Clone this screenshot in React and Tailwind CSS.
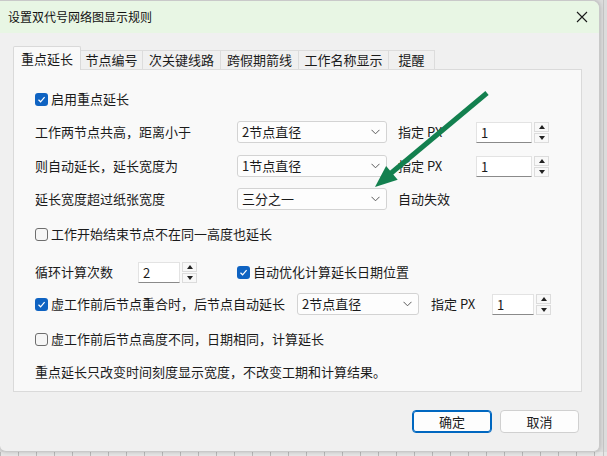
import React from 'react';

const font = { fontFamily: '"Noto Sans CJK SC", "Noto Sans", sans-serif' };

const tabs = [
  { label: '重点延长', w: 'w-[68px]' },
  { label: '节点编号', w: 'w-[62px]' },
  { label: '次关键线路', w: 'w-[78px]' },
  { label: '跨假期箭线', w: 'w-[78px]' },
  { label: '工作名称显示', w: 'w-[90px]' },
  { label: '提醒', w: 'w-[46px]' },
];

const CheckBox = ({ checked, label }) => (
  <div className="flex items-center h-[22px]">
    {checked ? (
      <span className="w-[13px] h-[13px] rounded-[3px] bg-[#0f63c2] flex items-center justify-center">
        <svg width="9" height="9" viewBox="0 0 9 9">
          <path d="M1.5 4.8 L3.6 6.8 L7.6 2.2" fill="none" stroke="#fff" strokeWidth="1.2" />
        </svg>
      </span>
    ) : (
      <span className="w-[13px] h-[13px] rounded-[3px] border border-[#6e6e6e] bg-[#f6f6f6]" />
    )}
    <span className="ml-[3px] leading-[22px]">{label}</span>
  </div>
);

const Select = ({ value, w }) => (
  <div className={`${w} shrink-0 h-[22px] flex items-center justify-between bg-[#fdfdfd] border border-[#d3d3d3] rounded-[3px] pl-[4px] pr-[6px]`}>
    <span className="leading-[20px]">{value}</span>
    <svg width="9" height="6" viewBox="0 0 9 6">
      <path d="M0.5 0.8 L4.5 4.8 L8.5 0.8" fill="none" stroke="#5a5a5a" strokeWidth="1" />
    </svg>
  </div>
);

const Spinner = () => (
  <div className="flex flex-col gap-[1px] ml-[2px] h-[21px]">
    <div className="w-[15px] h-[10px] bg-[#f8f8f8] border border-[#dcdcdc] flex items-center justify-center">
      <svg width="6" height="4" viewBox="0 0 6 4"><path d="M0 4 L3 0 L6 4 Z" fill="#222" /></svg>
    </div>
    <div className="w-[15px] h-[10px] bg-[#f8f8f8] border border-[#dcdcdc] flex items-center justify-center">
      <svg width="6" height="4" viewBox="0 0 6 4"><path d="M0 0 L6 0 L3 4 Z" fill="#222" /></svg>
    </div>
  </div>
);

const NumInput = ({ value, w }) => (
  <div className="flex items-center shrink-0">
    <div className={`${w} h-[21px] bg-white border border-[#e3e3e3] border-b-[#8a8a8a] pl-[4px] leading-[19px]`}>
      {value}
    </div>
    <Spinner />
  </div>
);

export default function App() {
  return (
    <div
      className="relative w-[607px] h-[456px] overflow-hidden bg-[#dcdcdc] text-[13px] text-[#1b1b1b]"
      style={font}
    >
      <div className="absolute left-0 right-0 top-[452px] h-[4px] bg-[repeating-linear-gradient(90deg,#b9b9b9_0px,#b9b9b9_1px,#e6e6e6_1px,#e6e6e6_18px)]" />
      <div className="absolute top-0 bottom-0 left-[603px] w-[1px] bg-[#c4c4c4]" />

      <div className="relative w-[600px] h-[452px] bg-[#f0f0f0] rounded-tr-[8px] rounded-b-[6px] border border-l-0 border-[#c9c9c9] shadow-[0_0_4px_rgba(0,0,0,0.2)] overflow-hidden flex flex-col">
        {/* title bar */}
        <div className="h-[32px] bg-[#e8f6e4] flex items-center justify-between pl-[8px] pr-[10px] shrink-0">
          <span className="text-[12px] leading-[16px] text-[#111]">设置双代号网络图显示规则</span>
          <svg width="12" height="12" viewBox="0 0 12 12" className="mr-[1px]">
            <path d="M1 1 L11 11 M11 1 L1 11" stroke="#1a1a1a" strokeWidth="1.1" />
          </svg>
        </div>

        <div className="pt-[14px] pl-[13px]">
          {/* tabs */}
          <div className="flex items-end h-[23px]">
            {tabs.map((t, i) =>
              i === 0 ? (
                <div
                  key={t.label}
                  className={`${t.w} h-[24px] relative z-10 bg-[#f9f9f9] border border-b-0 border-[#d9d9d9] rounded-t-[2px] flex items-center justify-center leading-[22px]`}
                >
                  {t.label}
                </div>
              ) : (
                <div
                  key={t.label}
                  className={`${t.w} h-[20px] bg-[#f0f0f0] border border-l-0 border-[#dcdcdc] flex items-center justify-center leading-[18px]`}
                >
                  {t.label}
                </div>
              )
            )}
          </div>

          {/* panel */}
          <div className="w-[569px] h-[323px] -mt-px bg-[#f9f9f9] border border-[#dadada] pl-[21px] pt-[18px]">
            <CheckBox checked label="启用重点延长" />

            <div className="flex items-center h-[22px] mt-[11px]">
              <span className="w-[202px] shrink-0">工作两节点共高，距离小于</span>
              <Select value="2节点直径" w="w-[150px]" />
              <span className="w-[89px] shrink-0 pl-[11px]">指定 PX</span>
              <NumInput value="1" w="w-[56px]" />
            </div>

            <div className="flex items-center h-[22px] mt-[12px]">
              <span className="w-[202px] shrink-0">则自动延长，延长宽度为</span>
              <Select value="1节点直径" w="w-[150px]" />
              <span className="w-[89px] shrink-0 pl-[11px]">指定 PX</span>
              <NumInput value="1" w="w-[56px]" />
            </div>

            <div className="flex items-center h-[22px] mt-[11px]">
              <span className="w-[202px] shrink-0">延长宽度超过纸张宽度</span>
              <Select value="三分之一" w="w-[150px]" />
              <span className="pl-[11px]">自动失效</span>
            </div>

            <div className="mt-[13px]">
              <CheckBox label="工作开始结束节点不在同一高度也延长" />
            </div>

            <div className="flex items-center h-[22px] mt-[16px]">
              <div className="w-[202px] shrink-0 flex items-center">
                <span className="w-[103px] shrink-0">循环计算次数</span>
                <NumInput value="2" w="w-[42px]" />
              </div>
              <CheckBox checked label="自动优化计算延长日期位置" />
            </div>

            <div className="flex items-center h-[22px] mt-[10px]">
              <div className="w-[262px] shrink-0">
                <CheckBox checked label="虚工作前后节点重合时，后节点自动延长" />
              </div>
              <Select value="2节点直径" w="w-[122px]" />
              <span className="w-[73px] shrink-0 pl-[12px]">指定 PX</span>
              <NumInput value="1" w="w-[42px]" />
            </div>

            <div className="mt-[13px]">
              <CheckBox label="虚工作前后节点高度不同，日期相同，计算延长" />
            </div>

            <div className="h-[22px] mt-[11px] leading-[22px]">
              重点延长只改变时间刻度显示宽度，不改变工期和计算结果。
            </div>
          </div>
        </div>

        {/* buttons */}
        <div className="flex justify-end gap-[8px] pr-[20px] mt-[18px]">
          <button className="w-[80px] h-[23px] rounded-[4px] bg-[#fdfdfd] border border-[#0067c0] shadow-[inset_0_0_0_1px_#0067c0] leading-[21px] text-[13px]">
            确定
          </button>
          <button className="w-[79px] h-[23px] rounded-[4px] bg-[#fdfdfd] border border-[#d0d0d0] leading-[21px] text-[13px]">
            取消
          </button>
        </div>
      </div>

      {/* green annotation arrow */}
      <svg className="absolute left-0 top-0 pointer-events-none" width="607" height="456">
        <line x1="487" y1="93" x2="390" y2="174" stroke="#13804f" strokeWidth="5" />
        <polygon points="375,187 397.7,179.7 386.1,165.9" fill="#13804f" />
      </svg>
    </div>
  );
}
